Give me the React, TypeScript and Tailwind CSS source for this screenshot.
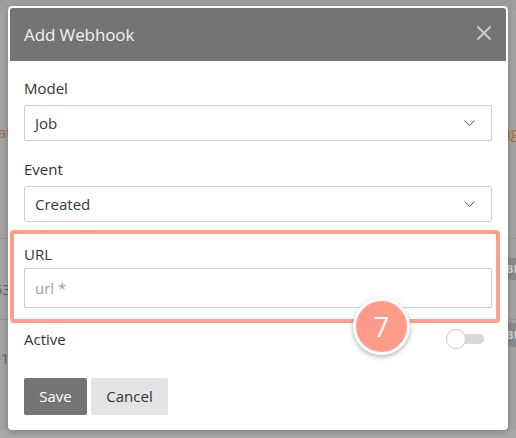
import React from "react";

const font = { fontFamily: '"Open Sans", "Noto Sans", sans-serif' };

function Chevron() {
  return (
    <svg width="11" height="6" viewBox="0 0 11 6" fill="none">
      <path d="M0.5 0.5l5 5 5-5" stroke="#5a5a5a" strokeWidth="1" />
    </svg>
  );
}

function Select({ value }: { value: string }) {
  return (
    <div className="h-[36px] border border-[#cfcfcf] rounded-[2px] flex items-center justify-between pl-[10px] pr-[16px] text-[15px] text-[#2d3a4f]">
      <span>{value}</span>
      <Chevron />
    </div>
  );
}

export default function App() {
  return (
    <div className="relative w-[516px] h-[438px] overflow-hidden bg-[#a3a3a3]" style={font}>
      {/* background page (dimmed) */}
      <div className="flex flex-col w-full h-full">
        <div className="h-[10px] bg-[#9d9d9d] shrink-0" />
        <div className="h-[114px] shrink-0" />
        <div className="h-[16px] flex justify-between items-center text-[15px] text-[#a86a3a] shrink-0 leading-none">
          <span className="-ml-[2px]">at</span>
          <span className="-mr-[3px] underline">ag</span>
        </div>
        <div className="h-[98px] shrink-0" />
        <div className="h-px bg-[#959595] shrink-0" />
        <div className="h-[19px] shrink-0" />
        <div className="h-[22px] flex justify-end shrink-0">
          <div className="w-[10px] bg-[#8a8a8a] text-[11px] text-[#cfcfcf] leading-[22px] font-bold overflow-hidden">BL</div>
        </div>
        <div className="h-[18px] flex items-center text-[15px] text-[#666] shrink-0">
          <span className="-ml-[6px]">53</span>
        </div>
        <div className="h-[21px] shrink-0" />
        <div className="h-px bg-[#959595] shrink-0" />
        <div className="h-[3px] shrink-0" />
        <div className="h-[24px] flex justify-end shrink-0">
          <div className="w-[10px] bg-[#8a8a8a] text-[11px] text-[#cfcfcf] leading-[24px] font-bold overflow-hidden">BL</div>
        </div>
        <div className="h-[22px] flex items-center text-[15px] text-[#666] shrink-0">
          <span className="-ml-[4px]">-1</span>
        </div>
        <div className="flex-1" />
        <div className="h-[8px] bg-[#a9a9a9] shrink-0" />
      </div>

      {/* dialog */}
      <div className="absolute left-[8px] top-[6px] w-[500px] h-[424px] bg-white rounded-[4px] p-[2px] shadow-[0_2px_6px_rgba(0,0,0,0.25)]">
        <div className="h-[53px] bg-[#747474] rounded-t-[3px] flex items-center justify-between pl-[14px] pr-[14px]">
          <span className="text-[17px] text-[#f2f2f2] font-medium tracking-[-0.1px]">Add Webhook</span>
          <svg width="16" height="16" viewBox="0 0 16 16" className="-mt-[4px]">
            <path d="M1.5 1.5l13 13M14.5 1.5l-13 13" stroke="#cbcbcb" strokeWidth="2" />
          </svg>
        </div>
        <div className="px-[14px] flex flex-col">
          <div className="mt-[17px] h-[20px] leading-[20px] text-[15px] text-[#333]">Model</div>
          <div className="mt-[7px]">
            <Select value="Job" />
          </div>
          <div className="mt-[18px] h-[20px] leading-[20px] text-[15px] text-[#333]">Event</div>
          <div className="mt-[7px]">
            <Select value="Created" />
          </div>
          <div className="mt-[22px] h-[20px] leading-[20px] text-[15px] text-[#333]">URL</div>
          <div className="mt-[4px] h-[40px] border border-[#cfcfcf] rounded-[2px] flex items-center pl-[10px] text-[15px] text-[#a0a0a0]">
            url *
          </div>
          <div className="mt-[21px] h-[20px] flex items-center justify-between">
            <span className="text-[15px] text-[#333] leading-[20px]">Active</span>
            <div className="relative w-[38px] h-[20px] flex items-center mr-[8px]">
              <div className="w-full h-[10px] rounded-full bg-[#d8d8d8]" />
              <div className="absolute left-0 top-0 w-[20px] h-[20px] rounded-full bg-white border border-[#c8c8c8]" />
            </div>
          </div>
          <div className="mt-[29px] flex gap-[4px]">
            <button className="w-[63px] h-[37px] rounded-[2px] bg-[#747474] text-white text-[15px]">Save</button>
            <button className="w-[77px] h-[37px] rounded-[2px] bg-[#e4e4e6] text-[#333] text-[15px]">Cancel</button>
          </div>
        </div>
      </div>

      {/* annotation highlight */}
      <div className="absolute left-[10px] top-[230px] w-[490px] h-[93px] border-[4px] border-[#ff9e8d] rounded-[4px]" />
      <div className="absolute left-[353px] top-[298px] w-[57px] h-[57px] rounded-full bg-[#ff9c89] border-[3px] border-white shadow-[0_2px_5px_rgba(0,0,0,0.3)] flex items-center justify-center text-white text-[27px] leading-none">
        7
      </div>
    </div>
  );
}
